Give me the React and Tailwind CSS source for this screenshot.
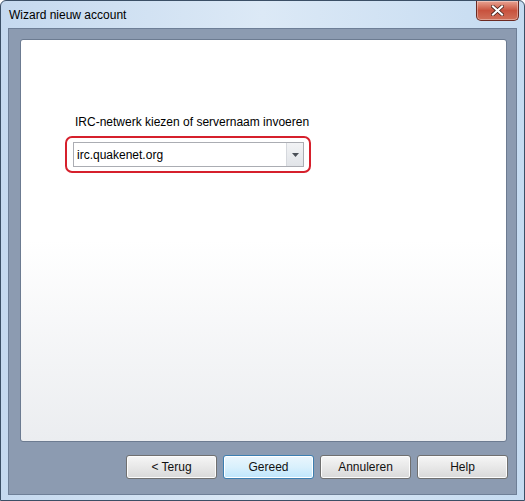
export default function App() {
  const font = { fontFamily: '"Liberation Sans", Arial, sans-serif' };
  const btn =
    "w-[91px] h-[24px] rounded-[3px] border border-[#707070] text-[12px] text-[#111] flex items-center justify-center bg-gradient-to-b from-[#f6f6f6] via-[#e8e8e8] to-[#d9d9d9] shadow-[inset_0_0_0_1px_#fcfcfc]";
  return (
    <div className="w-[525px] h-[501px] overflow-hidden" style={font}>
      <div className="w-[525px] h-[501px] flex flex-col border border-[#3b4f66] rounded-t-[6px] bg-gradient-to-r from-[#c5d9ef] via-[#dce9f6] to-[#c5dbf1]">
        {/* title bar */}
        <div className="h-[27px] flex items-start justify-between shrink-0">
          <div className="pl-[8px] pt-[7px] text-[12px] text-black leading-[14px]">Wizard nieuw account</div>
          <div className="mr-[5px] w-[43px] h-[20px] rounded-b-[5px] border border-[#6b2a22] border-t-0 bg-gradient-to-b from-[#e8a393] via-[#c8523e] to-[#d0705a] flex items-center justify-center shadow-[inset_0_0_0_1px_rgba(255,255,255,0.35)]">
            <svg width="13" height="11" viewBox="0 0 13 11">
              <path d="M2 1.5 L11 9.5 M11 1.5 L2 9.5" stroke="#3a1a14" strokeWidth="3.6" strokeLinecap="square" />
              <path d="M2 1.5 L11 9.5 M11 1.5 L2 9.5" stroke="#ffffff" strokeWidth="2.2" strokeLinecap="square" />
            </svg>
          </div>
        </div>
        {/* body */}
        <div className="flex-1 mx-[7px] mb-[5px] bg-[#8c9bb1] border border-[#6e7f97] flex flex-col">
          <div className="mt-[10px] ml-[11px] mr-[9px] h-[403px] rounded-[3px] border border-[#6c7b91] bg-gradient-to-b from-white via-white to-[#ebedf0] pt-[75px] pl-[54px]">
            <div className="text-[12px] text-black leading-[14px]">IRC-netwerk kiezen of servernaam invoeren</div>
            <div className="mt-[7px] ml-[-10px] w-[246px] h-[37px] rounded-[7px] border-[2.5px] border-[#d6202c] flex items-center pl-[6px]">
              <div className="w-[231px] h-[25px] border border-[#abadb3] bg-white flex">
                <div className="flex-1 pl-[3px] flex items-center text-[12px] text-black">irc.quakenet.org</div>
                <div className="w-[17px] h-full border-l border-[#d5d8dd] bg-gradient-to-b from-[#f2f3f5] to-[#e1e4e8] flex items-center justify-center">
                  <svg width="7" height="4" viewBox="0 0 7 4"><path d="M0 0 H7 L3.5 4 Z" fill="#4a4f57" /></svg>
                </div>
              </div>
            </div>
          </div>
          <div className="mt-[13px] flex justify-end gap-[6px] pr-[8px]">
            <div className={btn}>&lt; Terug</div>
            <div className="w-[91px] h-[24px] rounded-[3px] border border-[#3c7fb1] text-[12px] text-[#111] flex items-center justify-center bg-gradient-to-b from-[#eaf6fd] via-[#d9f0fc] to-[#bee6fd] shadow-[inset_0_0_0_1px_#ffffff]">Gereed</div>
            <div className={btn}>Annuleren</div>
            <div className={btn}>Help</div>
          </div>
        </div>
      </div>
    </div>
  );
}
